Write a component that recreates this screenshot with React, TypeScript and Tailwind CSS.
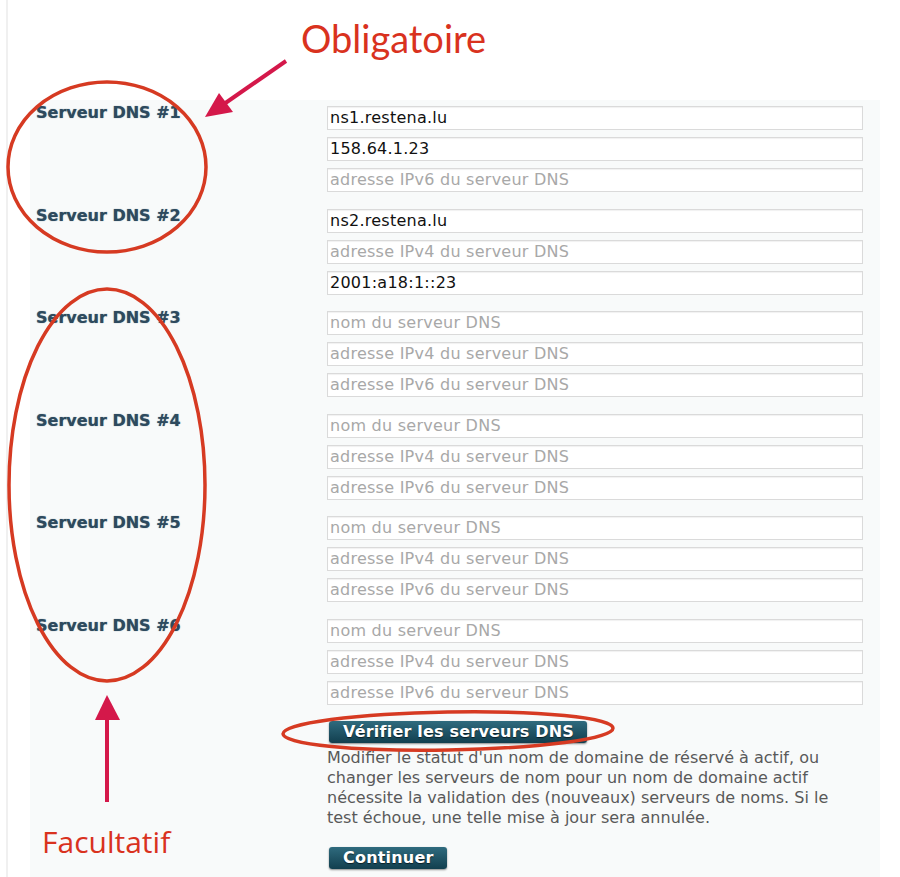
import React from "react";

type Field = { value?: string; placeholder: string };

const groups: { label: string; fields: Field[] }[] = [
  {
    label: "Serveur DNS #1",
    fields: [
      { value: "ns1.restena.lu", placeholder: "nom du serveur DNS" },
      { value: "158.64.1.23", placeholder: "adresse IPv4 du serveur DNS" },
      { placeholder: "adresse IPv6 du serveur DNS" },
    ],
  },
  {
    label: "Serveur DNS #2",
    fields: [
      { value: "ns2.restena.lu", placeholder: "nom du serveur DNS" },
      { placeholder: "adresse IPv4 du serveur DNS" },
      { value: "2001:a18:1::23", placeholder: "adresse IPv6 du serveur DNS" },
    ],
  },
  ...[3, 4, 5, 6].map((n) => ({
    label: `Serveur DNS #${n}`,
    fields: [
      { placeholder: "nom du serveur DNS" },
      { placeholder: "adresse IPv4 du serveur DNS" },
      { placeholder: "adresse IPv6 du serveur DNS" },
    ],
  })),
];

const font = { fontFamily: '"DejaVu Sans", Verdana, sans-serif' };

function Btn({ children }: { children: React.ReactNode }) {
  return (
    <button
      className="ml-[2px] h-[22px] pl-[14px] pr-[13px] rounded-[3px] bg-gradient-to-b from-[#2f6b7e] to-[#123f4f] text-white font-bold text-[16px] tracking-[0.2px] leading-[22px] shadow-[0_1px_2px_rgba(0,0,0,0.45)] [text-shadow:0_1px_1px_rgba(0,0,0,0.6)] self-start"
      style={font}
    >
      {children}
    </button>
  );
}

export default function App() {
  return (
    <div className="relative w-[900px] h-[877px] bg-white overflow-hidden flex pl-[6px]" style={font}>
      <div className="flex-1 border-l-2 border-[#f0f0f0] pl-[22px] pt-[100px] flex">
        <div className="w-[850px] bg-[#f8fafa] pt-[6px] pl-[6px] flex flex-col">
          {groups.map((g) => (
            <div key={g.label} className="flex mb-[16.5px]">
              <div className="w-[291px] -mt-[2px] text-[16px] leading-[18px] font-bold text-[#2d4a5e] [text-shadow:0_0_1px_rgba(45,74,94,0.7)]">
                {g.label}
              </div>
              <div className="w-[536px] flex flex-col gap-[7px]">
                {g.fields.map((f, i) => (
                  <input
                    key={i}
                    readOnly
                    value={f.value ?? ""}
                    placeholder={f.placeholder}
                    className="h-[24px] w-full bg-white border border-[#dadada] shadow-[inset_0_1px_1px_rgba(0,0,0,0.06)] px-[2px] text-[16px] tracking-[0.25px] text-[#111] placeholder:text-[#a8a8a8] outline-none"
                    style={font}
                  />
                ))}
              </div>
            </div>
          ))}
          <div className="flex flex-col pl-[291px]">
            <Btn>Vérifier les serveurs DNS</Btn>
            <p className="mt-[5px] text-[16px] leading-[20px] text-[#595959] whitespace-nowrap">
              Modifier le statut d'un nom de domaine de réservé à actif, ou
              <br />
              changer les serveurs de nom pour un nom de domaine actif
              <br />
              nécessite la validation des (nouveaux) serveurs de noms. Si le
              <br />
              test échoue, une telle mise à jour sera annulée.
            </p>
            <div className="mt-[19px] flex">
              <Btn>Continuer</Btn>
            </div>
          </div>
        </div>
      </div>

      {/* Annotation overlay */}
      <svg className="absolute inset-0 pointer-events-none" width="900" height="877" viewBox="0 0 900 877">
        <ellipse cx="107" cy="167" rx="99" ry="85" fill="none" stroke="#d63a22" strokeWidth="3.5" />
        <ellipse cx="107" cy="485" rx="98" ry="196" fill="none" stroke="#d63a22" strokeWidth="3.5" />
        <ellipse cx="448" cy="731" rx="165" ry="19" fill="none" stroke="#d63a22" strokeWidth="3.5" transform="rotate(-1 448 731)" />
        <line x1="286" y1="61" x2="224" y2="104" stroke="#d4184a" strokeWidth="4" />
        <polygon points="205,117 219,93 233,112" fill="#d4184a" />
        <line x1="107" y1="802" x2="107" y2="716" stroke="#d4184a" strokeWidth="4" />
        <polygon points="107,695 95,720 120,720" fill="#d4184a" />
      </svg>
      <div
        className="absolute left-[301px] top-[14px] text-[38px] leading-[48px] text-[#d9321e]"
        style={{ fontFamily: 'Lato, "Open Sans", sans-serif' }}
      >
        Obligatoire
      </div>
      <div
        className="absolute left-[42px] top-[822px] text-[30px] leading-[40px] text-[#d9321e]"
        style={{ fontFamily: '"Open Sans", "Noto Sans", sans-serif' }}
      >
        Facultatif
      </div>
    </div>
  );
}
